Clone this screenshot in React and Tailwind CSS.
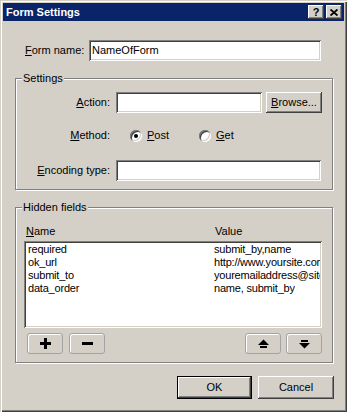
import React from 'react';

const raised = "shadow-[inset_-1px_-1px_0_#404040,inset_1px_1px_0_#ffffff,inset_-2px_-2px_0_#808080,inset_2px_2px_0_#d4d0c8]";
const sunken = "shadow-[inset_1px_1px_0_#808080,inset_-1px_-1px_0_#ffffff,inset_2px_2px_0_#404040,inset_-2px_-2px_0_#d4d0c8]";

const Group = ({ title, className, children }) => (
  <div className={`relative border border-[#808080] shadow-[1px_1px_0_#ffffff,inset_1px_1px_0_#ffffff] ${className}`}>
    <span className="absolute top-[-7px] left-[6px] bg-[#d4d0c8] px-[1px] leading-[13px]">{title}</span>
    {children}
  </div>
);

const Radio = ({ checked }) => (
  <div className={`w-[12px] h-[12px] rounded-full bg-white flex items-center justify-center ${sunken}`}>
    {checked && <div className="w-[4px] h-[4px] rounded-full bg-black" />}
  </div>
);

const ToolButton = ({ children }) => (
  <button className="w-[36px] h-[21px] rounded-[3px] border border-[#a3a3a3] bg-[#d4d0c8] shadow-[inset_1px_1px_0_#ffffff] flex items-center justify-center">
    {children}
  </button>
);

const rows = [
  { name: 'required', value: 'submit_by,name' },
  { name: 'ok_url', value: 'http://www.yoursite.com/thanks.html' },
  { name: 'submit_to', value: 'youremailaddress@site.com' },
  { name: 'data_order', value: 'name, submit_by' },
];

export default function App() {
  return (
    <div className="w-[347px] h-[412px] bg-[#d4d0c8] text-black text-[11px] leading-[13px] font-['Liberation_Sans',Arial,sans-serif] shadow-[inset_1px_1px_0_#d4d0c8,inset_2px_2px_0_#ffffff,inset_-1px_-1px_0_#404040,inset_-2px_-2px_0_#808080] flex flex-col overflow-hidden">
      {/* title bar */}
      <div className="mt-[3px] mx-[3px] h-[18px] bg-[#0a246a] flex items-center pl-[3px] pr-[2px]">
        <span className="text-white font-bold text-[11px] flex-1">Form Settings</span>
        <div className={`w-[16px] h-[14px] bg-[#d4d0c8] flex items-center justify-center font-bold text-[11px] ${raised}`}>?</div>
        <div className={`ml-[2px] w-[16px] h-[14px] bg-[#d4d0c8] flex items-center justify-center ${raised}`}>
          <svg width="8" height="7" viewBox="0 0 8 7">
            <path d="M0.5 0.5 L7.5 6.5 M7.5 0.5 L0.5 6.5" stroke="#000" strokeWidth="1.8" />
          </svg>
        </div>
      </div>

      {/* form name */}
      <div className="mt-[19px] pl-[25px] flex items-center">
        <span className="w-[64px]"><span className="underline">F</span>orm name:</span>
        <div className={`w-[232px] h-[21px] bg-white flex items-center pl-[3px] ${sunken}`}>NameOfForm</div>
      </div>

      {/* settings */}
      <Group title="Settings" className="mt-[17px] ml-[15px] w-[318px] h-[112px] shrink-0">
        <div className="pt-[13px] flex items-center">
          <span className="w-[94px] text-right"><span className="underline">A</span>ction:</span>
          <div className={`ml-[6px] w-[146px] h-[21px] bg-white ${sunken}`} />
          <button className={`ml-[4px] w-[56px] h-[21px] bg-[#d4d0c8] flex items-center justify-center ${raised}`}>
            <span><span className="underline">B</span>rowse...</span>
          </button>
        </div>
        <div className="mt-[12px] h-[21px] flex items-center">
          <span className="w-[94px] text-right"><span className="underline">M</span>ethod:</span>
          <div className="ml-[20px] w-[69px] flex items-center gap-[5px]">
            <Radio checked />
            <span><span className="underline">P</span>ost</span>
          </div>
          <div className="flex items-center gap-[5px]">
            <Radio />
            <span><span className="underline">G</span>et</span>
          </div>
        </div>
        <div className="mt-[14px] flex items-center">
          <span className="w-[94px] text-right"><span className="underline">E</span>ncoding type:</span>
          <div className={`ml-[6px] w-[205px] h-[21px] bg-white ${sunken}`} />
        </div>
      </Group>

      {/* hidden fields */}
      <Group title="Hidden fields" className="mt-[17px] ml-[15px] w-[318px] h-[156px] shrink-0">
        <div className="pt-[17px] pl-[10px] flex">
          <span className="w-[189px]"><span className="underline">N</span>ame</span>
          <span>Value</span>
        </div>
        <div className={`mt-[3px] ml-[8px] w-[298px] h-[87px] bg-white p-[2px] overflow-hidden ${sunken}`}>
          {rows.map((r) => (
            <div key={r.name} className="h-[13px] flex pl-[2px] whitespace-nowrap tracking-[-0.2px]">
              <span className="w-[186px] shrink-0">{r.name}</span>
              <span className="overflow-hidden">{r.value}</span>
            </div>
          ))}
        </div>
        <div className="mt-[5px] ml-[11px] w-[295px] flex items-center">
          <ToolButton>
            <svg width="11" height="11" viewBox="0 0 11 11">
              <path d="M0 5.5 H11 M5.5 0 V11" stroke="#000" strokeWidth="3" />
            </svg>
          </ToolButton>
          <div className="ml-[6px]">
            <ToolButton>
              <svg width="11" height="3" viewBox="0 0 11 3">
                <rect x="0" y="0" width="11" height="3" fill="#000" />
              </svg>
            </ToolButton>
          </div>
          <div className="flex-1" />
          <ToolButton>
            <svg width="11" height="10" viewBox="0 0 11 10">
              <polygon points="0,6 5.5,0.5 11,6" fill="#000" />
              <rect x="2" y="7" width="7" height="2" fill="#000" />
            </svg>
          </ToolButton>
          <div className="ml-[5px]">
            <ToolButton>
              <svg width="11" height="10" viewBox="0 0 11 10">
                <rect x="2" y="1" width="7" height="2" fill="#000" />
                <polygon points="0,4 11,4 5.5,9.5" fill="#000" />
              </svg>
            </ToolButton>
          </div>
        </div>
      </Group>

      {/* dialog buttons */}
      <div className="mt-[13px] pr-[13px] flex justify-end gap-[6px]">
        <div className="border border-black">
          <button className={`w-[73px] h-[21px] bg-[#d4d0c8] flex items-center justify-center ${raised}`}>OK</button>
        </div>
        <button className={`w-[76px] h-[23px] bg-[#d4d0c8] flex items-center justify-center ${raised}`}>Cancel</button>
      </div>
    </div>
  );
}
